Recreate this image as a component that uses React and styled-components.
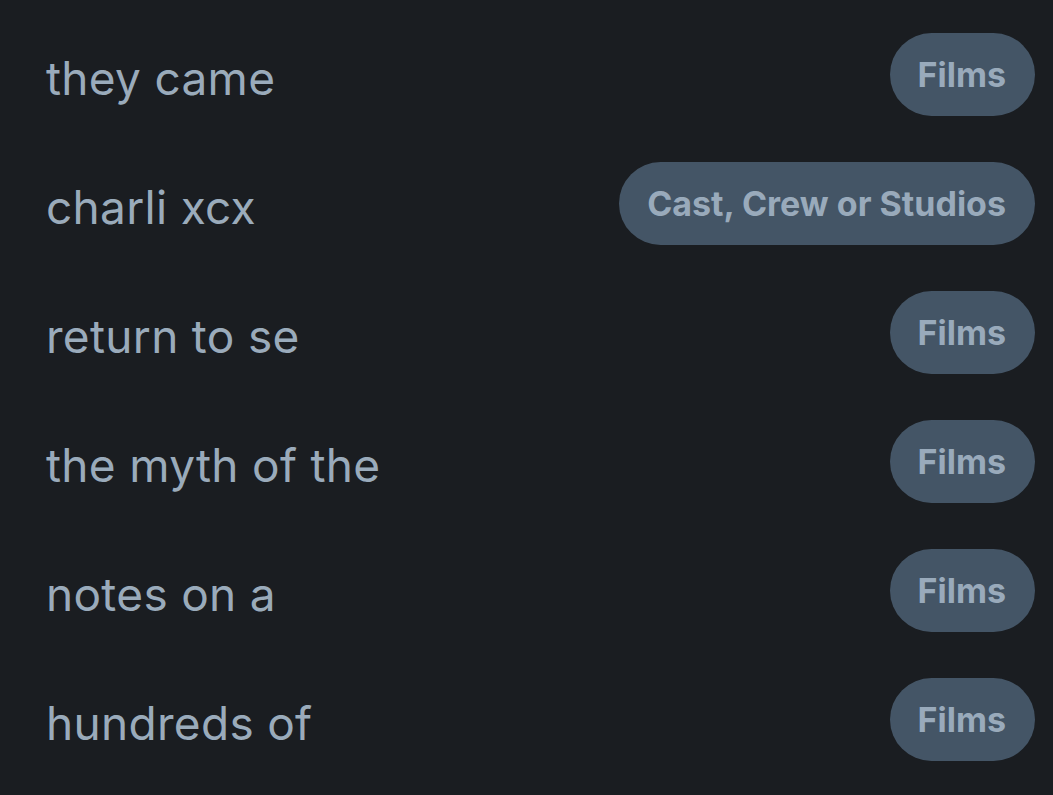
import React from "react";
import styled, { createGlobalStyle } from "styled-components";

const Global = createGlobalStyle`
  html, body { margin: 0; padding: 0; background: #1a1d21; }
  body { font-family: Inter, "Noto Sans", sans-serif; }
`;

const List = styled.ul`
  list-style: none;
  margin: 0;
  padding: 10px 18px 0 46px;
  width: 1053px;
  height: 795px;
  box-sizing: border-box;
  overflow: hidden;
  background: #1a1d21;
`;

const Row = styled.li`
  height: 129px;
  display: flex;
  align-items: center;
  justify-content: space-between;
`;

const Query = styled.span`
  font-size: 46px;
  font-weight: 400;
  color: #9aabbb;
  letter-spacing: 0.3px;
  margin-top: 6px;
`;

const Pill = styled.span`
  display: inline-flex;
  align-items: center;
  height: 83px;
  padding: 0 29px 0 28px;
  border-radius: 42px;
  background: #445566;
  color: #99aabb;
  font-size: 34px;
  font-weight: 700;
  white-space: nowrap;
`;

const items = [
  ["they came", "Films"],
  ["charli xcx", "Cast, Crew or Studios"],
  ["return to se", "Films"],
  ["the myth of the", "Films"],
  ["notes on a", "Films"],
  ["hundreds of", "Films"],
];

export default function App() {
  return (
    <>
      <Global />
      <List>
        {items.map(([q, t]) => (
          <Row key={q}>
            <Query>{q}</Query>
            <Pill>{t}</Pill>
          </Row>
        ))}
      </List>
    </>
  );
}
